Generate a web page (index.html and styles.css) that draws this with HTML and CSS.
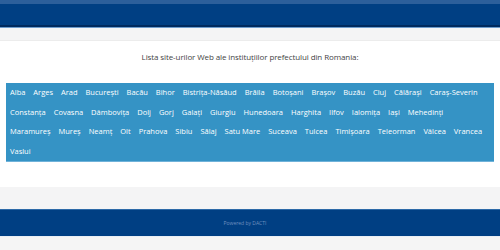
FILE: index.html
```html
<!DOCTYPE html>
<html lang="ro">
<head>
    <meta charset="UTF-8">
    <title>Institutia Prefectului</title>
    <link rel="stylesheet" href="styles.css">
</head>
<body>

<div class="header">
    <div class="header-top"></div>
    <div class="header-main"></div>
</div>

<div class="content">
    <p class="intro">Lista site-urilor Web ale instituţiilor prefectului din Romania:</p>

    <div class="judete">
        <a href="#">Alba</a>
        <a href="#">Arges</a>
        <a href="#">Arad</a>
        <a href="#">Bucureşti</a>
        <a href="#">Bacău</a>
        <a href="#">Bihor</a>
        <a href="#">Bistriţa-Năsăud</a>
        <a href="#">Brăila</a>
        <a href="#">Botoşani</a>
        <a href="#">Braşov</a>
        <a href="#">Buzău</a>
        <a href="#">Cluj</a>
        <a href="#">Călăraşi</a>
        <a href="#">Caraş-Severin</a><br>
        <a href="#">Constanţa</a>
        <a href="#">Covasna</a>
        <a href="#">Dâmboviţa</a>
        <a href="#">Dolj</a>
        <a href="#">Gorj</a>
        <a href="#">Galaţi</a>
        <a href="#">Giurgiu</a>
        <a href="#">Hunedoara</a>
        <a href="#">Harghita</a>
        <a href="#">Ilfov</a>
        <a href="#">Ialomiţa</a>
        <a href="#">Iaşi</a>
        <a href="#">Mehedinţi</a><br>
        <a href="#">Maramureş</a>
        <a href="#">Mureş</a>
        <a href="#">Neamţ</a>
        <a href="#">Olt</a>
        <a href="#">Prahova</a>
        <a href="#">Sibiu</a>
        <a href="#">Sălaj</a>
        <a href="#">Satu Mare</a>
        <a href="#">Suceava</a>
        <a href="#">Tulcea</a>
        <a href="#">Timişoara</a>
        <a href="#">Teleorman</a>
        <a href="#">Vâlcea</a>
        <a href="#">Vrancea</a><br>
        <a href="#">Vaslui</a>
    </div>
</div>

<div class="spacer"></div>

<div class="footer">Powered by DACTI</div>

<div class="bottom"></div>

</body>
</html>
```

FILE: styles.css
```css
body {
    margin: 0;
    padding: 0;
    font-family: "Open Sans", Arial, sans-serif;
    background-color: #f4f4f5;
}

.header-top {
    height: 4px;
    background-color: #2c5f9b;
}

.header-main {
    height: 21px;
    background-color: #003f83;
    border-bottom: 2px solid #002a5e;
    box-shadow: 0 1px 0 #6d9ccc;
}

.content {
    background-color: white;
    border-top: 1px solid #ececec;
    margin-top: 13px;
    padding: 0 6px 25px;
}

.intro {
    margin: 0;
    padding: 10px 0 0;
    height: 32px;
    text-align: center;
    font-size: 8px;
    letter-spacing: -0.1px;
    color: #444;
}

.judete {
    background-color: #3593c5;
    border-bottom: 1px solid #6fb2d9;
    padding: 0 2px 0 4px;
    line-height: 19.5px;
    font-size: 7.5px;
}

.judete a {
    color: white;
    text-decoration: none;
    white-space: nowrap;
    margin-right: 6px;
}

.spacer {
    height: 22px;
}

.footer {
    height: 26px;
    line-height: 26px;
    background-color: #003f83;
    border-top: 1px solid #2d6aa8;
    padding-right: 10px;
    text-align: center;
    font-size: 5px;
    color: #6f8fbf;
}

.bottom {
    height: 15px;
    border-top: 1px solid #e8eef5;
    background-color: #f5f5f5;
}
```
